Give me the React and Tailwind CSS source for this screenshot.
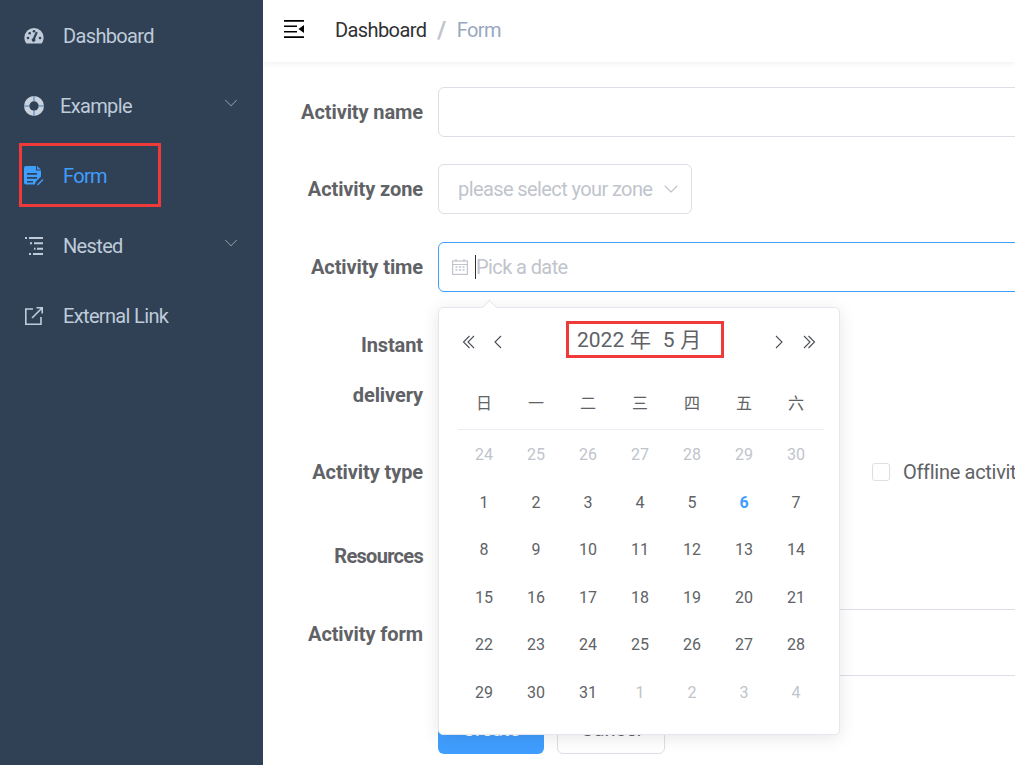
import { ChevronDown } from "lucide-react";

const font = "font-['Roboto','Noto_Sans_CJK_SC',sans-serif]";

const DashIcon = () => (
  <svg viewBox="0 0 20 18" className="w-[20px] h-[18px]" fill="#bfcbd9">
    <path d="M10 1a9.6 9.6 0 0 0-9.6 9.6c0 2.4.7 4.4 2 5.9h15.2c1.3-1.5 2-3.500 2-5.900A9.600 9.600 0 0 0 10 1z" />
    <circle cx="4" cy="11" r="1.300" fill="#304156" />
    <circle cx="5.700" cy="6.300" r="1.300" fill="#304156" />
    <circle cx="10" cy="4.300" r="1.300" fill="#304156" />
    <circle cx="16" cy="11" r="1.300" fill="#304156" />
    <path d="M13.800 5.500l-2.700 6.300a1.900 1.900 0 1 1-2.200-.6l2.900-6.500z" fill="#304156" />
  </svg>
);

const ExampleIcon = () => (
  <svg viewBox="0 0 20 20" className="w-[20px] h-[20px]">
    <circle cx="10" cy="10" r="10" fill="#c9d3df" />
    <circle cx="10" cy="10" r="4.700" fill="#304156" />
    <path d="M9.500 0h1v5h-1zM9.500 15h1v5h-1zM0 9.500h5v1H0zM15 9.500h5v1h-5z" fill="#4a7fb0" />
  </svg>
);

const FormIcon = () => (
  <svg viewBox="0 0 20 20" className="w-[20px] h-[20px]" fill="#409eff">
    <path d="M2 0h10v4.500h5v6l-5.500 5.500-.5 2.500H2a2 2 0 0 1-2-2V2a2 2 0 0 1 2-2zM13 0l4 3.500h-4z" />
    <path d="M3 7h10v1.800H3zM3 11h10v1.800H3zM3 15h6v1.500H3z" fill="#304156" />
    <path d="M13.500 18l5-5 1 1-5 5-1.500.5z" />
  </svg>
);

const NestedIcon = () => (
  <svg viewBox="0 0 18 18" className="w-[18px] h-[18px]" fill="#bfcbd9">
    <path d="M0 0h2v2H0zM4 0h14v2H4zM5 5.300h2v2H5zM9 5.300h9v2H9zM9 10.700h1.500v2H9zM12 10.700h6v2h-6zM4 16h2v2H4zM8 16h10v2H8z" />
  </svg>
);

const LinkIcon = () => (
  <svg viewBox="0 0 18 18" className="w-[18px] h-[18px]" fill="none" stroke="#bfcbd9" strokeWidth="1.600">
    <path d="M8 2H.800v15.200H16V10" />
    <path d="M7 11L17 1M11.500 .800h5.700v5.700" />
  </svg>
);

const Hamburger = () => (
  <svg viewBox="0 0 20 18" className="w-[20px] h-[18px] -mt-[2px]" fill="#000">
    <path d="M0 0h20v1.800H0zM0 5.400h13v1.600H0zM0 11h13v1.600H0zM0 16.200h20V18H0zM20 5v8l-5.500-4z" />
  </svg>
);

const CalendarIcon = () => (
  <svg viewBox="0 0 16 16" className="w-[16px] h-[16px]" fill="none" stroke="#c0c4cc" strokeWidth="1.200">
    <rect x=".600" y="2" width="14.800" height="13.400" />
    <path d="M.600 5.500h14.800M4 0v3M12 0v3" />
    <path d="M3.500 8h2M7 8h2M10.500 8h2M3.500 11h2M7 11h2M10.500 11h2" strokeWidth="1.400" />
  </svg>
);

// pager arrows of the date panel
const Arrow = ({ d }) => (
  <svg viewBox="0 0 24 24" className="w-[24px] h-[24px]" fill="none" stroke="#4a4d55" strokeWidth="1.100">
    <path d={d} />
  </svg>
);

const menu = [
  { label: "Dashboard", icon: <DashIcon />, pad: "gap-[19px]", left: "pl-[24px]" },
  { label: "Example", icon: <ExampleIcon />, arrow: true, pad: "gap-[16px]", left: "pl-[24px]" },
  { label: "Form", icon: <FormIcon />, active: true, pad: "gap-[19px]", left: "pl-[24px]" },
  { label: "Nested", icon: <NestedIcon />, arrow: true, pad: "gap-[20px]", left: "pl-[25px]" },
  { label: "External Link", icon: <LinkIcon />, pad: "gap-[20px]", left: "pl-[25px]" },
];

const Sidebar = () => (
  <aside className="w-[263px] shrink-0 bg-[#304156] pt-px">
    {menu.map((m) => (
      <div key={m.label} className={`relative h-[70px] flex items-center text-[20px] tracking-[-0.65px] ${m.left} ${m.pad} ${m.active ? "text-[#409eff]" : "text-[#bfcbd9]"}`}>
        {m.icon}
        <span>{m.label}</span>
        {m.arrow && <ChevronDown className="absolute right-[21px] top-[21px] w-[22px] h-[22px] text-[#8694a3]" strokeWidth={1.100} />}
        {m.active && <div className="absolute left-[19px] top-[2px] w-[142px] h-[64px] border-[3px] border-[#f03a3a]" />}
      </div>
    ))}
  </aside>
);

const Header = () => (
  <header className="h-[62px] shrink-0 flex items-center pl-[21px] pb-[2px] bg-white shadow-[0_1px_6px_rgba(0,21,41,0.08)] relative z-10 text-[20px] tracking-[-0.6px]">
    <Hamburger />
    <span className="ml-[31px] text-[#303133]">Dashboard</span>
    <span className="ml-[11px] text-[#c0c4cc] font-bold text-[24px] leading-none">/</span>
    <span className="ml-[11px] text-[#97a8be]">Form</span>
  </header>
);

const Row = ({ label, className, children }) => (
  <div className={`flex ${className}`}>
    <div className="w-[160px] shrink-0 text-right pr-[15px] text-[20px] leading-[50px] font-bold text-[#606266] tracking-[-0.1px]">{label}</div>
    <div className="flex-1 min-w-0">{children}</div>
  </div>
);

const Form = () => (
  <div className="pl-[15px] pt-[25px] w-[1100px]">
    <Row label="Activity name" className="mb-[27px]">
      <div className="h-[50px] border border-[#dcdfe6] rounded-[6px]" />
    </Row>
    <Row label="Activity zone" className="mb-[28px]">
      <div className="h-[50px] w-[254px] border border-[#dcdfe6] rounded-[6px] flex items-center justify-between pl-[19px] pr-[8px] text-[20px] tracking-[-0.6px] text-[#c0c4cc]">
        <span className="whitespace-nowrap">please select your zone</span>
        <ChevronDown className="w-[24px] h-[24px]" strokeWidth={1.100} />
      </div>
    </Row>
    <Row label="Activity time" className="mb-[28px]">
      <div className="h-[50px] border border-[#409eff] rounded-[6px] flex items-center pl-[13px] text-[20px] tracking-[-0.6px] text-[#c0c4cc]">
        <CalendarIcon />
        <span className="ml-[7px] border-l border-[#303133] leading-[24px]">Pick a date</span>
      </div>
    </Row>
    <Row label={<>Instant<br />delivery</>} className="mb-[27px]">
      <div className="h-[50px]" />
    </Row>
    <Row label="Activity type" className="mb-[34px]">
      <div className="h-[50px] flex items-center pl-[434px] text-[20px] tracking-[-0.3px] text-[#606266]">
        <span className="w-[18px] h-[18px] border border-[#dcdfe6] rounded-[3px] mr-[13px]" />
        <span className="whitespace-nowrap">Offline activities</span>
      </div>
    </Row>
    <Row label={<span className="tracking-[-0.7px]">Resources</span>} className="mb-[28px]">
      <div className="h-[50px]" />
    </Row>
    <Row label="Activity form" className="mb-[28px]">
      <div className="h-[67px] border border-[#dcdfe6] rounded-[6px]" />
    </Row>
    <div className="flex gap-[13px] ml-[160px]">
      <button className="w-[106px] h-[50px] bg-[#409eff] rounded-[6px] text-white text-[20px]">Create</button>
      <button className="w-[108px] h-[50px] bg-white border border-[#dcdfe6] rounded-[6px] text-[#606266] text-[20px]">Cancel</button>
    </div>
  </div>
);

const weekdays = ["日", "一", "二", "三", "四", "五", "六"];

const weeks = [
  [24, 25, 26, 27, 28, 29, 30],
  [1, 2, 3, 4, 5, 6, 7],
  [8, 9, 10, 11, 12, 13, 14],
  [15, 16, 17, 18, 19, 20, 21],
  [22, 23, 24, 25, 26, 27, 28],
  [29, 30, 31, 1, 2, 3, 4],
];

const dayColor = (w, d) => {
  if (w === 0 || (w === 5 && d < 10)) return "text-[#c0c4cc]";
  if (w === 1 && d === 6) return "text-[#409eff] font-bold";
  return "text-[#606266]";
};

const Picker = () => (
  <div className="absolute left-[175px] top-[307px] w-[402px] h-[428px] bg-white border border-[#e4e7ed] rounded-[5px] shadow-[0_3px_17px_rgba(0,0,0,0.1)] z-20 pt-[10px] px-[19px] text-[#606266]">
    <div className="absolute -top-[6px] left-[45px] w-[11px] h-[11px] bg-white border-l border-t border-[#e4e7ed] rotate-45" />
    <div className="relative h-[47px] -mx-px flex items-center justify-between">
      <div className="flex items-center gap-[5px]">
        <Arrow d="M12.500 6l-6 6 6 6M17 6l-6 6 6 6" />
        <Arrow d="M15 6l-6 6 6 6" />
      </div>
      <div className="flex items-center gap-[6px]">
        <Arrow d="M9 6l6 6-6 6" />
        <Arrow d="M11.500 6l6 6-6 6M7 6l6 6-6 6" />
      </div>
      <div className="absolute left-[109px] top-[3px] w-[158px] h-[37px] border-[3px] border-[#f03a3a] flex items-center pl-[8px] pt-[3px] text-[21px] whitespace-pre [word-spacing:0.6px]">2022 年  5 月</div>
    </div>
    <div className="grid grid-cols-[repeat(7,52px)] w-[366px] mt-[22px] h-[43px] border-b border-[#ebeef5] text-[16px] text-center leading-[33px]">
      {weekdays.map((d) => (
        <span key={d}>{d}</span>
      ))}
    </div>
    <div className="grid grid-cols-[repeat(7,52px)] pt-px text-[16px] text-center">
      {weeks.flatMap((week, w) =>
        week.map((d) => (
          <span key={`${w}-${d}`} className={`h-[47.600px] leading-[47.600px] ${dayColor(w, d)}`}>{d}</span>
        ))
      )}
    </div>
  </div>
);

const App = () => (
  <div className={`flex w-[1015px] h-[765px] overflow-hidden ${font}`}>
    <Sidebar />
    <main className="flex-1 min-w-0 flex flex-col relative overflow-hidden bg-white">
      <Header />
      <Form />
      <Picker />
    </main>
  </div>
);

export default App;
